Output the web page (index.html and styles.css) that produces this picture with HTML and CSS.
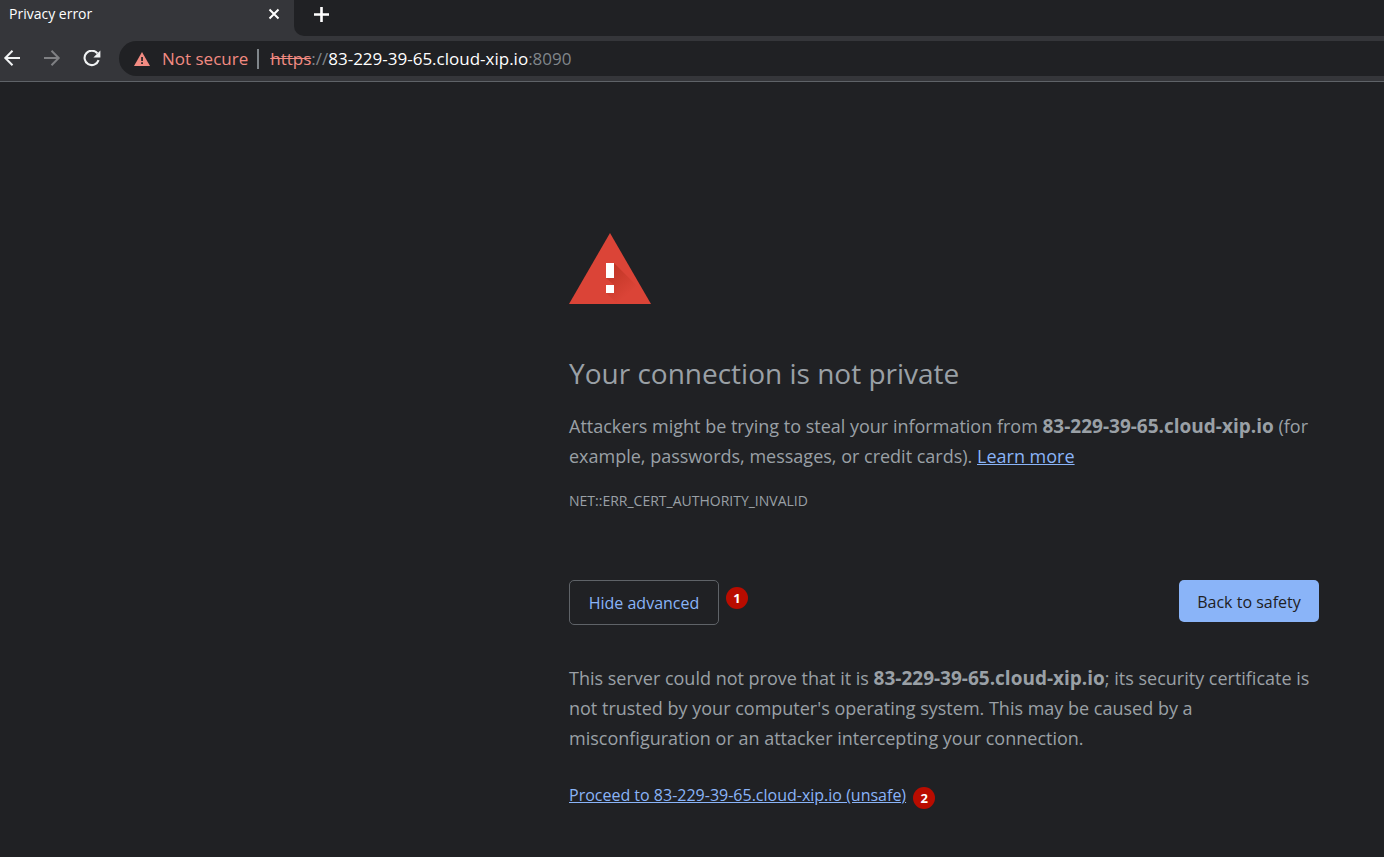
FILE: index.html
```html
<!DOCTYPE html>
<html lang="en">
<head>
    <meta charset="UTF-8">
    <meta name="viewport" content="width=device-width, initial-scale=1.0">
    <title>Privacy error</title>
    <link rel="stylesheet" href="styles.css">
</head>
<body>
    <header class="browser">
        <div class="tab-row">
            <div class="tab">
                <span class="tab-title">Privacy error</span>
                <button type="button" class="icon-button" aria-label="Close tab">
                    <svg width="12" height="12" viewBox="0 0 12 12"><path d="M1.5 1.5l9 9M10.5 1.5l-9 9" stroke="#fff" stroke-width="2" fill="none"/></svg>
                </button>
            </div>
            <div class="tab-strip">
                <button type="button" class="icon-button" aria-label="New tab">
                    <svg width="16" height="16" viewBox="0 0 16 16"><path d="M8.5 1v15M1 8.5h15" stroke="#fff" stroke-width="2.6" fill="none"/></svg>
                </button>
            </div>
        </div>
        <div class="toolbar">
            <nav class="nav-buttons">
                <button type="button" class="icon-button" aria-label="Back">
                    <svg width="18" height="18" viewBox="0 0 18 18"><path d="M17 8H2.5M9.5 .8L2.3 8l7.2 7.2" stroke="#f1f3f4" stroke-width="2" fill="none"/></svg>
                </button>
                <button type="button" class="icon-button" aria-label="Forward" disabled>
                    <svg width="18" height="18" viewBox="0 0 18 18"><path d="M1 8h14.5M8.5 .8L15.7 8l-7.2 7.2" stroke="#7f8083" stroke-width="2" fill="none"/></svg>
                </button>
                <button type="button" class="icon-button" aria-label="Reload">
                    <svg width="18" height="18" viewBox="0 0 18 18"><path d="M14.4 3.4A7.2 7.2 0 1 0 15.6 10.2" stroke="#f1f3f4" stroke-width="2.1" fill="none"/><path d="M17.4 .4v7h-7z" fill="#f1f3f4"/></svg>
                </button>
            </nav>
            <div class="address-bar">
                <svg width="16" height="14" viewBox="0 0 16 14"><path d="M8 0l8 14H0z" fill="#f28b82"/><path d="M7.2 5h1.7v4H7.2zM7.2 10.3h1.7V12H7.2z" fill="#202124"/></svg>
                <span class="not-secure">Not secure</span>
                <span class="divider"></span>
                <div class="url" role="textbox" contenteditable="true" spellcheck="false" aria-label="Address"><s>https</s>://<span class="host">83-229-39-65.cloud-xip.io</span>:8090</div>
            </div>
        </div>
    </header>

    <main class="interstitial">
        <svg class="warning-icon" width="82" height="71" viewBox="0 0 82 71">
            <defs>
                <linearGradient id="shade" x1="40" y1="35" x2="66" y2="66" gradientUnits="userSpaceOnUse">
                    <stop offset="0" stop-color="#a52714" stop-opacity="0.5"/>
                    <stop offset="0.8" stop-color="#a52714" stop-opacity="0"/>
                </linearGradient>
            </defs>
            <path d="M41 0l41 71H0z" fill="#db4437"/>
            <path d="M45 30l29 29 7 12H49L37 60l8-8-8-7z" fill="url(#shade)"/>
            <path d="M37 30h8v15h-8zM37 52h8v8h-8z" fill="#fff"/>
        </svg>
        <h1>Your connection is not private</h1>
        <p>Attackers might be trying to steal your information from <strong>83-229-39-65.cloud-xip.io</strong> (for example, passwords, messages, or credit cards). <a href="#">Learn more</a></p>
        <div class="error-code">NET::ERR_CERT_AUTHORITY_INVALID</div>
        <div class="actions">
            <button type="button" class="secondary">Hide advanced</button>
            <span class="badge">1</span>
            <button type="button" class="primary">Back to safety</button>
        </div>
        <p>This server could not prove that it is <strong>83-229-39-65.cloud-xip.io</strong>; its security certificate is not trusted by your computer's operating system. This may be caused by a misconfiguration or an attacker intercepting your connection.</p>
        <div class="proceed">
            <a href="#">Proceed to 83-229-39-65.cloud-xip.io (unsafe)</a>
            <span class="badge">2</span>
        </div>
    </main>
</body>
</html>
```
FILE: styles.css
```css
* {
    box-sizing: border-box;
}
body {
    margin: 0;
    background: #202124;
    color: #9aa0a6;
    font-family: "Segoe UI", "Open Sans", sans-serif;
}
button {
    font-family: inherit;
    cursor: pointer;
}
svg {
    display: block;
    flex: none;
}
a {
    color: #8ab4f8;
}
.browser {
    background: #35363a;
    border-bottom: 1px solid #5f6368;
}
.tab-row {
    display: flex;
    height: 36px;
}
.tab {
    display: flex;
    align-items: center;
    justify-content: space-between;
    width: 294px;
    padding: 0 14px 8px 9px;
}
.tab-title {
    color: #fff;
    font-size: 14px;
    line-height: 20px;
}
.tab-strip {
    flex: 1;
    display: flex;
    align-items: center;
    padding: 0 0 8px 19px;
    background: #202124;
    border-bottom-left-radius: 10px;
}
.icon-button {
    padding: 0;
    border: none;
    background: none;
}
.toolbar {
    display: flex;
    padding: 5px 0;
}
.nav-buttons {
    display: flex;
    align-items: center;
    gap: 22px;
    padding: 0 18px 0 3px;
}
.address-bar {
    flex: 1;
    display: flex;
    align-items: center;
    height: 35px;
    padding-left: 15px;
    background: #202124;
    border-radius: 18px 0 0 18px;
    font-size: 17px;
    line-height: 24px;
    white-space: nowrap;
}
.not-secure {
    margin: 0 9px 0 12px;
    color: #f28b82;
}
.divider {
    width: 2px;
    height: 20px;
    margin-right: 11px;
    background: #80868b;
}
.url {
    color: #80868b;
    outline: none;
}
.url s {
    color: #f28b82;
}
.host {
    color: #fff;
}
.interstitial {
    max-width: 815px;
    margin-left: auto;
    padding: 151px 65px 40px 0;
}
h1 {
    margin: 47px 0 16px;
    font-size: 28px;
    font-weight: 400;
    line-height: 44px;
}
p {
    margin: 0;
    font-size: 18px;
    line-height: 30px;
}
p strong {
    font-size: 19px;
    line-height: 20px;
}
.error-code {
    margin-top: 20px;
    font-size: 14px;
    line-height: 20px;
}
.actions {
    display: flex;
    align-items: flex-start;
    gap: 7px;
    margin: 69px 0 38px;
}
.actions button {
    border-radius: 5px;
    font-size: 16px;
}
.secondary {
    width: 150px;
    height: 45px;
    padding: 0;
    border: 1px solid #5f6368;
    background: none;
    color: #8ab4f8;
}
.primary {
    width: 140px;
    height: 42px;
    margin-left: auto;
    padding: 2px 0 0;
    border: none;
    background: #8ab4f8;
    color: #202124;
}
.badge {
    display: flex;
    align-items: center;
    justify-content: center;
    width: 22px;
    height: 22px;
    border-radius: 50%;
    background: #b90c00;
    color: #fff;
    font-size: 13px;
    font-weight: 700;
}
.actions .badge {
    margin-top: 7px;
}
.proceed {
    display: flex;
    align-items: flex-end;
    gap: 7px;
    margin-top: 30px;
    font-size: 16px;
    line-height: 24px;
}
.proceed a {
    padding-bottom: 2px;
}
```
